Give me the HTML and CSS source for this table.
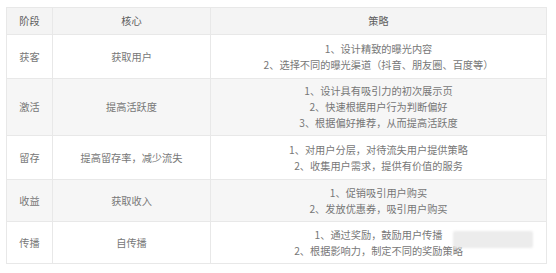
FILE: index.html
```
<!DOCTYPE html>
<html lang="zh">
<head>
    <meta charset="UTF-8">
    <title>用户运营阶段</title>
    <link rel="stylesheet" href="styles.css">
</head>
<body>
<div class="wrap">
    <table class="stages">
        <colgroup>
            <col class="c-stage">
            <col class="c-core">
            <col class="c-plan">
        </colgroup>
        <thead>
            <tr class="head">
                <th>阶段</th>
                <th>核心</th>
                <th>策略</th>
            </tr>
        </thead>
        <tbody>
            <tr class="r1">
                <td>获客</td>
                <td>获取用户</td>
                <td>1、设计精致的曝光内容<br>2、选择不同的曝光渠道（抖音、朋友圈、百度等）</td>
            </tr>
            <tr class="r2 alt">
                <td>激活</td>
                <td>提高活跃度</td>
                <td>1、设计具有吸引力的初次展示页<br>2、快速根据用户行为判断偏好<br>3、根据偏好推荐，从而提高活跃度</td>
            </tr>
            <tr class="r3">
                <td>留存</td>
                <td>提高留存率，减少流失</td>
                <td>1、对用户分层，对待流失用户提供策略<br>2、收集用户需求，提供有价值的服务</td>
            </tr>
            <tr class="r4 alt">
                <td>收益</td>
                <td>获取收入</td>
                <td>1、促销吸引用户购买<br>2、发放优惠券，吸引用户购买</td>
            </tr>
            <tr class="r5">
                <td>传播</td>
                <td>自传播</td>
                <td>1、通过奖励，鼓励用户传播<br>2、根据影响力，制定不同的奖励策略</td>
            </tr>
        </tbody>
    </table>
    <div class="mark"></div>
</div>
</body>
</html>
```

FILE: styles.css
```
*{
    margin: 0;
    padding: 0;
    box-sizing: border-box;
}

body{
    background: #fff;
    font-family: "Noto Sans CJK SC", "Noto Sans", sans-serif;
    color: #777;
}

.wrap{
    position: relative;
    padding: 7px 0 0 6px;
}

.stages{
    width: 540px;
    border-collapse: collapse;
    table-layout: fixed;
    font-size: 10.2px;
    line-height: 16px;
}

.c-stage{ width: 46px; }
.c-core{ width: 158px; }
.c-plan{ width: 336px; }

.stages th,
.stages td{
    border: 1px solid #e8e8e8;
    text-align: center;
    vertical-align: middle;
    font-weight: 400;
    padding: 0;
}

.head{
    background: #f4f4f4;
    height: 27px;
}

.head th{
    color: #5e5e5e;
}

.alt{
    background: #f6f6f6;
}

.r1{ height: 44px; }
.r2{ height: 57px; }
.r3{ height: 44px; }
.r4{ height: 42px; }
.r5{ height: 42px; }

.mark{
    position: absolute;
    left: 453px;
    top: 231px;
    width: 80px;
    height: 17px;
    background: #ececec;
    border-radius: 2px;
    filter: blur(1px);
}
```
